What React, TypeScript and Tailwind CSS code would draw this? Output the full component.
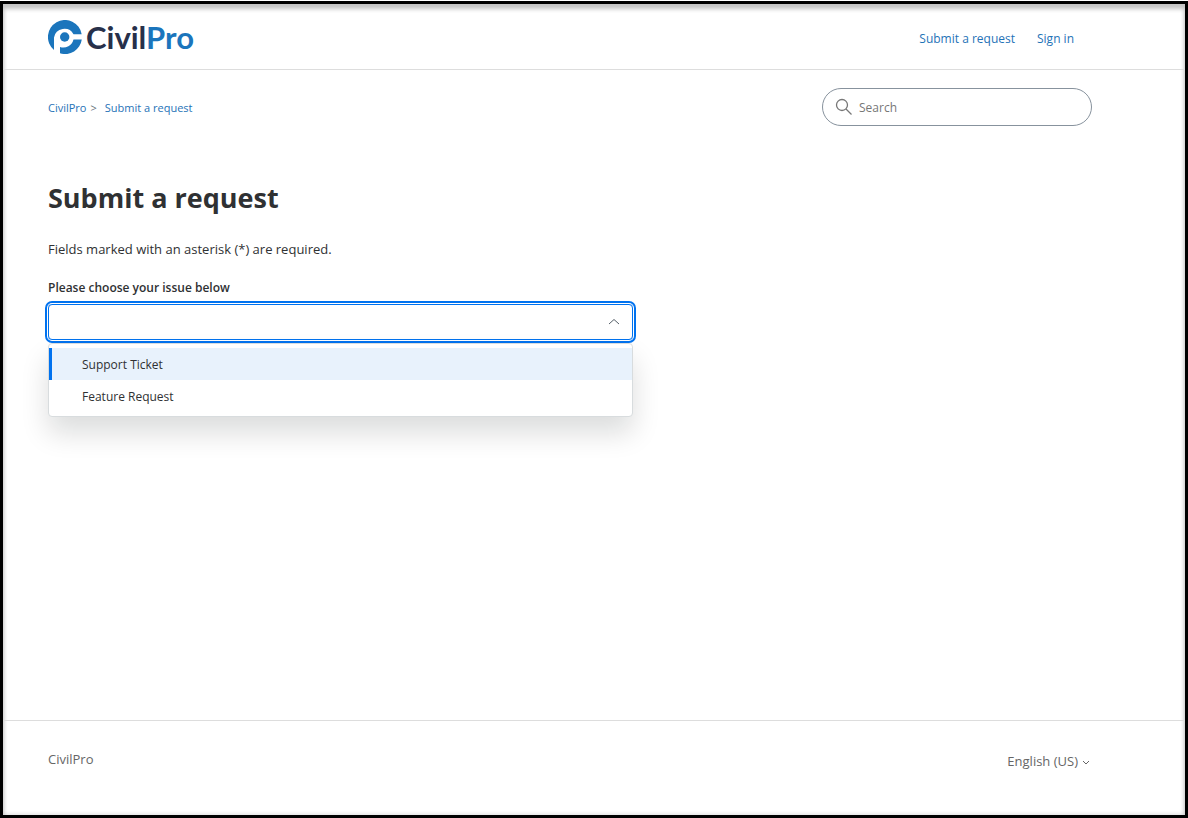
import React, { useState } from 'react';

const issues = ['Support Ticket', 'Feature Request'];

const Logo: React.FC = () => (
  <a href="#home" aria-label="CivilPro home" className="flex items-center gap-1">
    <svg viewBox="0 0 34 34" className="h-[34px] w-[34px]" fill="none">
      <path d="M6 30 A17 17 0 1 1 33.700 14.300 L25.500 14.300 A10.500 10.500 0 0 0 6 17.500 Z" fill="#1b75bc" />
      <path d="M33.800 19.500 A17 17 0 0 1 12 33.300 L12 27 A10.500 10.500 0 0 0 25.500 19.500 Z" fill="#1b75bc" />
      <circle cx="16.700" cy="17" r="4.700" fill="#1b75bc" />
    </svg>
    <span className="font-['Lato',sans-serif] text-[31px] leading-9 font-bold text-[#27304a]">
      Civil<span className="text-[#1b75bc]">Pro</span>
    </span>
  </a>
);

const App: React.FC = () => {
  const [open, setOpen] = useState(true);
  const [issue, setIssue] = useState('');

  return (
    <div className="flex min-h-screen flex-col bg-white pt-px font-['Open_Sans','Noto_Sans',sans-serif] text-xs text-[#2f3133]">
      <div className="flex flex-1 flex-col border-[3px] border-black shadow-[inset_0_5px_4px_#c4c4c4,inset_0_0_5px_#ccc]">
        <header className="flex h-[66px] items-center justify-between border-b border-[#ddd] pr-[111px] pl-[45px]">
          <Logo />
          <nav className="flex gap-[22px] pt-1 text-[#1f73b7]">
            <a href="#request">Submit a request</a>
            <a href="#signin">Sign in</a>
          </nav>
        </header>

        <main className="flex-1 pr-[93px] pl-[45px]">
          <div className="flex items-center justify-between pt-[18px]">
            <nav className="flex gap-1 pt-0.5 text-[11px] leading-4 text-[#1f73b7]">
              <a href="#home">CivilPro</a>
              <span className="text-[#68737d]">&gt;</span>
              <a href="#request" className="ml-1">Submit a request</a>
            </nav>
            <label className="flex h-[38px] w-[270px] items-center gap-1.5 rounded-full border border-[#87929d] px-3">
              <svg viewBox="0 0 18 18" className="h-[18px] w-[18px]" fill="none" stroke="#777" strokeWidth="1.300">
                <circle cx="7" cy="7" r="5.500" />
                <path d="M11 11 L16.500 16.500" />
              </svg>
              <input type="search" aria-label="Search" placeholder="Search" className="min-w-0 flex-1 pt-0.5 outline-none placeholder:text-[#777]" />
            </label>
          </div>

          <h1 className="mt-[52px] text-[27px] leading-10 font-bold">Submit a request</h1>
          <p className="mt-[21px] text-[13px] leading-5">Fields marked with an asterisk (*) are required.</p>

          <div className="relative mt-[19px] w-[56%]">
            <span id="issue-label" className="block leading-5 font-semibold">Please choose your issue below</span>
            <button
              type="button"
              aria-labelledby="issue-label"
              aria-haspopup="listbox"
              aria-expanded={open}
              onClick={() => setOpen(!open)}
              className="mt-1.5 flex h-[36px] w-full items-center justify-between rounded border border-[#0072ef] px-3 ring-2 ring-[#0072ef] ring-offset-1"
            >
              <span>{issue}</span>
              <svg viewBox="0 0 12 12" className="h-3 w-3" fill="none" stroke="#555f68">
                <path d="M1 8 L6 3.500 L11 8" />
              </svg>
            </button>
            {open && (
              <ul role="listbox" aria-labelledby="issue-label" className="absolute top-full left-0 mt-[3px] w-full rounded border border-[#d8dcde] bg-white py-1 shadow-[0_16px_28px_0_rgba(10,13,14,0.14)]">
                {issues.map((name, index) => (
                  <li key={name} role="presentation">
                    <button
                      type="button"
                      role="option"
                      aria-selected={issue === name}
                      onClick={() => { setIssue(name); setOpen(false); }}
                      className={`block h-8 w-full border-l-[3px] pt-0.5 pl-[30px] text-left ${index === 0 ? 'border-[#0072ef] bg-[#e8f2fc]' : 'border-transparent'}`}
                    >
                      {name}
                    </button>
                  </li>
                ))}
              </ul>
            )}
          </div>
        </main>

        <footer className="flex h-[95px] items-start justify-between border-t border-[#ddd] pt-7 pr-[95px] pl-[45px] text-[13px] text-[#666]">
          <a href="#home" className="leading-5">CivilPro</a>
          <button type="button" className="mt-0.5 flex items-center gap-1 leading-5">
            English (US)
            <svg viewBox="0 0 8 8" className="mt-0.5 h-2 w-2" fill="none" stroke="#666">
              <path d="M1 3 L4 6 L7 3" />
            </svg>
          </button>
        </footer>
      </div>
    </div>
  );
};

export default App;
